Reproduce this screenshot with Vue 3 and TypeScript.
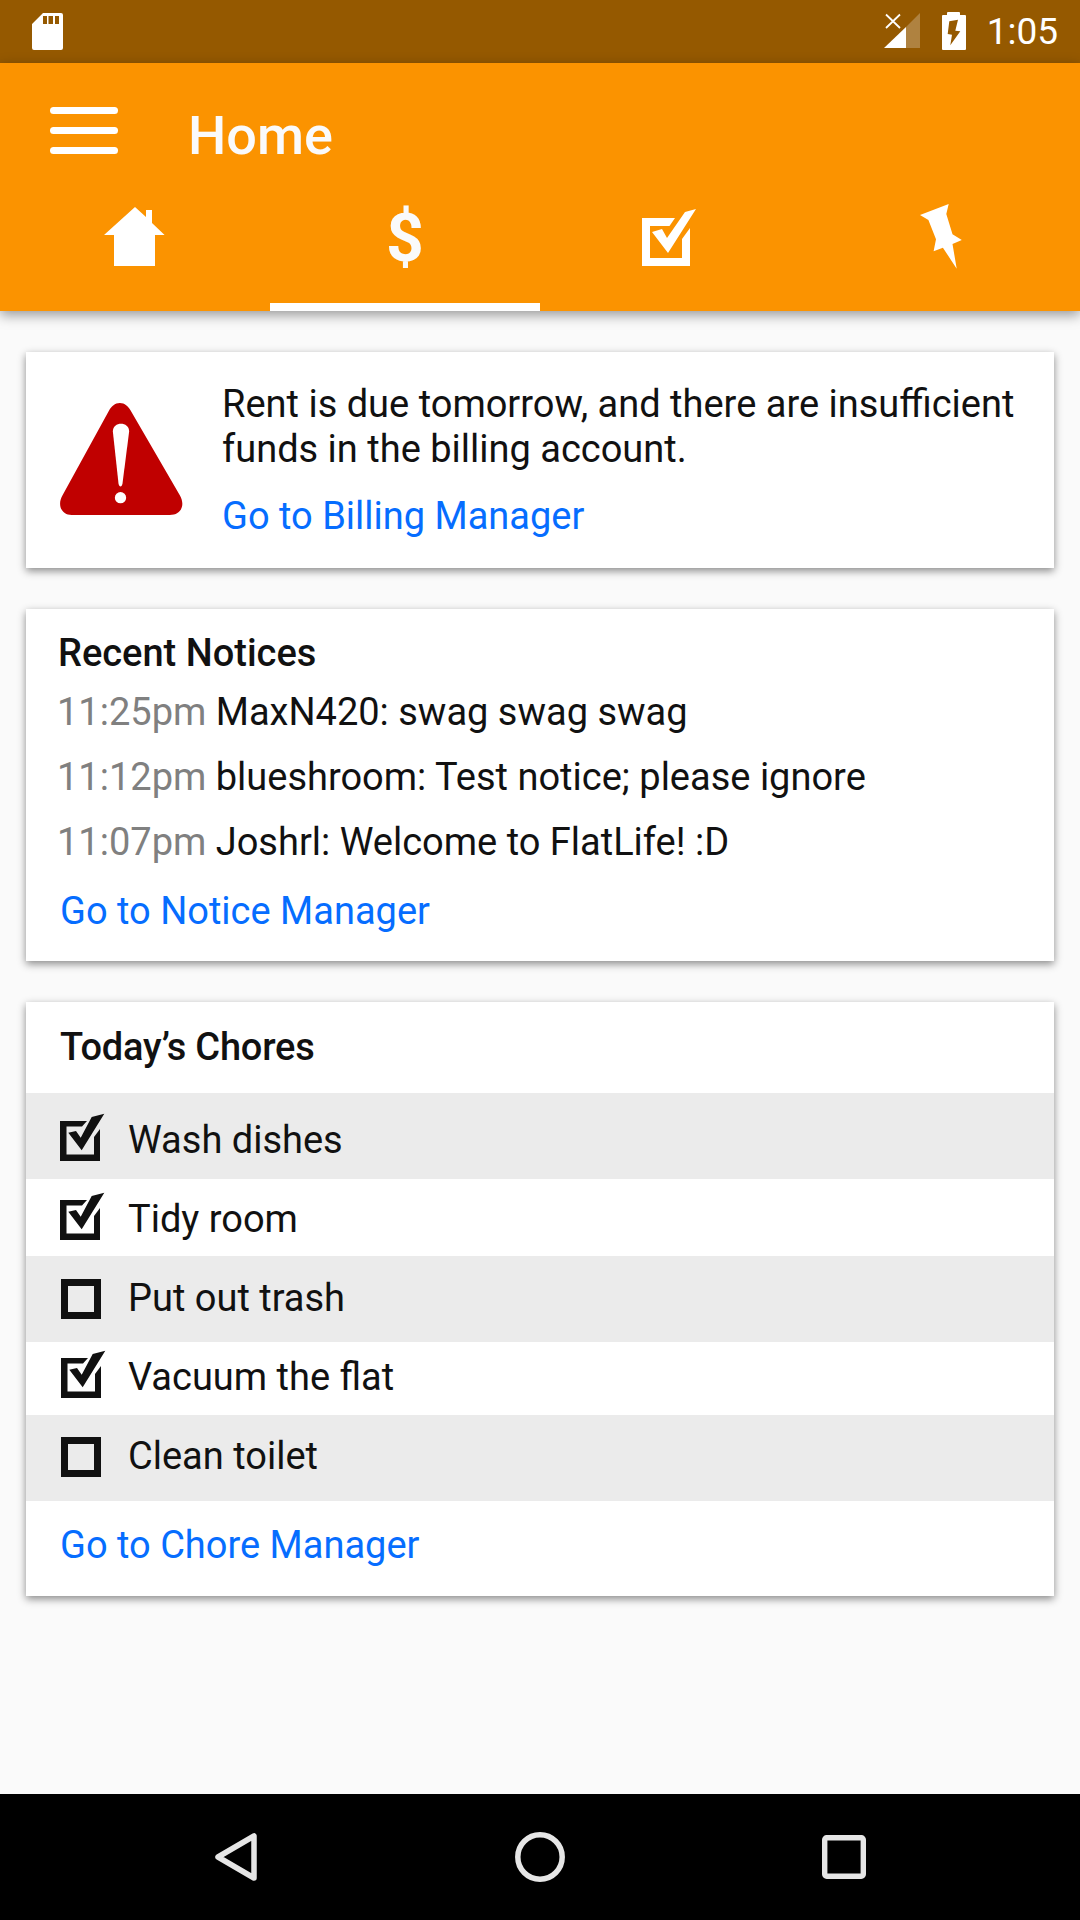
<script setup lang="ts">
const notices = [
  { time: '11:25pm', text: 'MaxN420: swag swag swag' },
  { time: '11:12pm', text: 'blueshroom: Test notice; please ignore' },
  { time: '11:07pm', text: 'Joshrl: Welcome to FlatLife! :D' },
]

// row heights are uneven in the app, so icon and label offsets differ per row
const chores = [
  { name: 'Wash dishes', done: true, shaded: true, height: 86, iconLeft: 34, iconTop: 20, textTop: 24.5 },
  { name: 'Tidy room', done: true, shaded: false, height: 77, iconLeft: 34, iconTop: 13, textTop: 17.5 },
  { name: 'Put out trash', done: false, shaded: true, height: 86, iconLeft: 35, iconTop: 15, textTop: 19.5 },
  { name: 'Vacuum the flat', done: true, shaded: false, height: 73, iconLeft: 35, iconTop: 8, textTop: 12.5 },
  { name: 'Clean toilet', done: false, shaded: true, height: 86, iconLeft: 35, iconTop: 14, textTop: 19 },
]
</script>

<template>
  <div class="screen">
    <div class="status">
      <svg class="sd" viewBox="0 0 31 37"><path fill-rule="evenodd" fill="#fff" d="M11 0H29Q31 0 31 2V35Q31 37 29 37H2Q0 37 0 35V11ZM11 3V11H15V3ZM16.500 3V11H21V3ZM23 3V11H27V3Z" /></svg>
      <div class="status-right">
        <svg class="signal" viewBox="0 0 36 36">
          <path fill="#fff" fill-opacity=".25" d="M36 0V35H22V14Z" />
          <path fill="#fff" d="M0 35L22 14V35Z" />
          <path stroke="#fff" stroke-width="1.800" d="M2 1.500L16 15M16 1.500L2 15" />
        </svg>
        <svg class="battery" viewBox="0 0 24 38"><path fill-rule="evenodd" fill="#fff" d="M5 1Q5 0 6 0H17Q18 0 18 1V3H23Q24 3 24 4V37Q24 38 23 38H1Q0 38 0 37V4Q0 3 1 3H5ZM7.300 9.300L5.700 22L10 22.700L8.300 33.300L18.300 19.300L13.300 18.700L16 7.700Z" /></svg>
        <span class="time">1:05</span>
      </div>
    </div>

    <header class="toolbar">
      <div class="title-row">
        <div class="burger"><span></span><span></span><span></span></div>
        <h1>Home</h1>
      </div>
      <div class="tabs">
        <div class="tab">
          <svg viewBox="0 0 72 72"><path fill="#fff" d="M36 6L47 16V9H53V22L65.600 34H56V65H15V34H5Z" /></svg>
        </div>
        <div class="tab active"><span class="dollar">$</span></div>
        <div class="tab">
          <svg viewBox="0 0 72 72"><path fill="#fff" d="M3 17H36L30.500 25H11V57H43V38L51 27V65H3ZM13 31L23 28L28 37L46 11L57 8L29 52Z" /></svg>
        </div>
        <div class="tab">
          <svg viewBox="0 0 72 72"><path fill="#fff" d="M11 14L39.700 3L37.300 13L43.500 33.300L52.800 39L43.500 43L47.700 67.700L33.900 46.700L24.600 50.300L27 38.300L19.400 19Z" /></svg>
        </div>
      </div>
    </header>

    <main class="content">
      <section class="card alert">
        <svg class="warn" viewBox="180 188 370 337">
          <path fill="#c00000" d="M360 188C375 188 385 198 392 210L540 465C558 495 545 525 510 525H215C185 525 170 495 188 465L328 210C335 198 345 188 360 188Z" />
          <path fill="#fff" d="M339 274C339 243 388 243 388 274L368 430C366 442 358 442 356 430Z" />
          <circle fill="#fff" cx="362" cy="473" r="17" />
        </svg>
        <div class="alert-body">
          <p>Rent is due tomorrow, and there are insufficient funds in the billing account.</p>
          <a class="link">Go to Billing Manager</a>
        </div>
      </section>

      <section class="card notices">
        <h2>Recent Notices</h2>
        <div v-for="n in notices" :key="n.time" class="notice">
          <span class="stamp">{{ n.time }}</span> {{ n.text }}
        </div>
        <a class="link">Go to Notice Manager</a>
      </section>

      <section class="card chores">
        <h2>Today’s Chores</h2>
        <div
          v-for="c in chores"
          :key="c.name"
          class="chore"
          :class="{ shaded: c.shaded }"
          :style="{ height: c.height + 'px' }"
        >
          <svg
            class="box"
            viewBox="0 0 46 48"
            :style="{ marginLeft: c.iconLeft + 'px', marginTop: c.iconTop + 'px' }"
          >
            <template v-if="c.done">
              <path fill="#111" d="M0 8H27L22 13.500H6.500V41.500H34V24L40 16V48H0Z" />
              <path fill="#111" d="M8.300 19.700L16 18L20.700 24.700L31.700 4L44.300 .7L21.700 37.300Z" />
            </template>
            <rect v-else x="3.500" y="11.500" width="33" height="33" fill="none" stroke="#111" stroke-width="7" />
          </svg>
          <span :style="{ marginLeft: 56 - c.iconLeft + 'px', marginTop: c.textTop + 'px' }">{{ c.name }}</span>
        </div>
        <a class="link">Go to Chore Manager</a>
      </section>
    </main>

    <nav class="navbar">
      <svg class="back" viewBox="0 0 42 48"><path fill="none" stroke="#e6e6e6" stroke-width="5.500" stroke-linejoin="round" d="M39 3V45L3 24Z" /></svg>
      <svg class="circle" viewBox="0 0 50 50"><circle cx="25" cy="25" r="22.200" fill="none" stroke="#e6e6e6" stroke-width="5.500" /></svg>
      <svg class="square" viewBox="0 0 44 44"><rect x="2.700" y="2.700" width="38.600" height="38.600" rx="2" fill="none" stroke="#e6e6e6" stroke-width="5.400" /></svg>
    </nav>
  </div>
</template>

<style>
body {
  margin: 0;
  background: #fafafa;
}
</style>

<style scoped>
.screen {
  width: 1080px;
  height: 1920px;
  display: flex;
  flex-direction: column;
  font-family: Roboto, sans-serif;
  color: #111;
  background: #fafafa;
  overflow: hidden;
}

.status {
  height: 63px;
  flex: none;
  background: #955900;
  display: flex;
  align-items: center;
  justify-content: space-between;
  padding: 0 22px 0 32px;
  color: #fff;
}

.sd {
  width: 31px;
  height: 37px;
  margin-top: -1px;
}

.status-right {
  display: flex;
  align-items: center;
}

.signal {
  width: 36px;
  height: 36px;
  margin-top: -1px;
}

.battery {
  width: 24px;
  height: 38px;
  margin: -1px 21px 0 22px;
}

.time {
  font-size: 37px;
  line-height: 63px;
}

.toolbar {
  flex: none;
  height: 248px;
  background: #fb9300;
  box-shadow: 0 4px 12px rgba(0, 0, 0, 0.4);
  position: relative;
  z-index: 1;
}

.title-row {
  height: 132px;
  display: flex;
  align-items: center;
  padding-left: 50px;
}

.burger {
  width: 68px;
  display: flex;
  flex-direction: column;
  gap: 13px;
  margin-top: 3px;
}

.burger span {
  height: 7px;
  background: #fff;
  border-radius: 4px;
}

h1 {
  margin: 13px 0 0 70px;
  font-size: 54px;
  font-weight: 500;
  color: #fafafa;
}

.tabs {
  display: flex;
  height: 116px;
}

.tab {
  flex: 1;
  display: flex;
  justify-content: center;
  padding-top: 6px;
  box-sizing: border-box;
  border-bottom: 8px solid transparent;
}

.tab svg {
  width: 72px;
  height: 72px;
}

.tab.active {
  border-bottom-color: #fff;
}

.dollar {
  margin-top: 2px;
  font-size: 66px;
  font-weight: 700;
  line-height: 72px;
  color: #fafafa;
}

.content {
  flex: 1;
  padding: 41px 26px 0;
  display: flex;
  flex-direction: column;
  gap: 41px;
}

.card {
  background: #fff;
  box-shadow: 0 3px 8px rgba(0, 0, 0, 0.45);
}

.alert {
  height: 216px;
  box-sizing: border-box;
  display: flex;
  align-items: center;
  padding-left: 34px;
}

.warn {
  width: 123px;
  height: 112px;
  flex: none;
  margin: -2px 39px 0 0;
}

.alert p {
  margin: 0 0 22px;
  font-size: 38px;
  line-height: 45px;
}

.link {
  display: block;
  font-size: 38px;
  line-height: 45px;
  color: #066dff;
}

h2 {
  margin: 0;
  font-size: 38px;
  font-weight: 500;
  line-height: 45px;
}

.notices {
  height: 352px;
  box-sizing: border-box;
  padding: 22px 32px 0;
}

.notices h2 {
  margin-bottom: 4px;
}

.notice {
  margin-left: -1px;
  font-size: 38px;
  line-height: 65px;
}

.stamp {
  color: #808080;
}

.notices .link {
  margin-top: 14px;
  margin-left: 2px;
}

.chores {
  height: 594px;
}

.chores h2 {
  height: 91px;
  padding: 23px 34px 0;
  box-sizing: border-box;
  letter-spacing: -0.2px;
}

.chore {
  display: flex;
  align-items: flex-start;
  font-size: 38px;
  line-height: 45px;
}

.chore.shaded {
  background: #ebebeb;
}

.box {
  display: block;
  flex: none;
  width: 46px;
  height: 48px;
}

.chores .link {
  margin: 22px 0 0 34px;
}

.navbar {
  height: 126px;
  flex: none;
  background: #000;
  position: relative;
}

.navbar svg {
  position: absolute;
}

.back {
  left: 215px;
  top: 39px;
  width: 42px;
  height: 48px;
}

.circle {
  left: 515px;
  top: 38px;
  width: 50px;
  height: 50px;
}

.square {
  left: 822px;
  top: 41px;
  width: 44px;
  height: 44px;
}
</style>
